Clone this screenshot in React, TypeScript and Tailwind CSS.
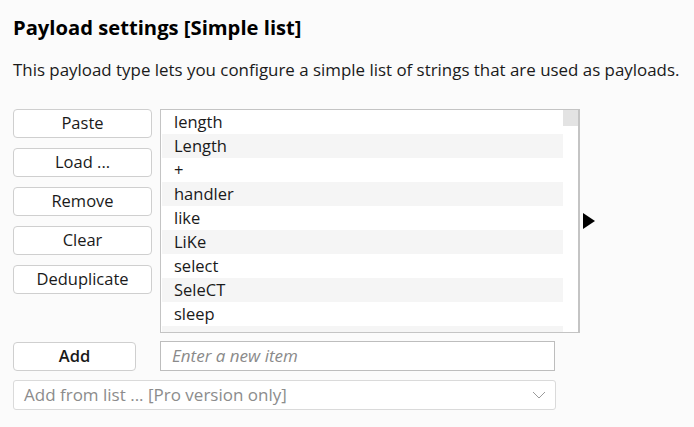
import React from "react";

const items = ["length", "Length", "+", "handler", "like", "LiKe", "select", "SeleCT", "sleep", ""];
const buttons = ["Paste", "Load ...", "Remove", "Clear", "Deduplicate"];

export default function App() {
  return (
    <div
      className="w-[694px] h-[427px] bg-[#fbfbfb] text-[#1a1a1a] pl-[13px] pt-[14px] overflow-hidden"
      style={{ fontFamily: '"Open Sans", "Noto Sans", sans-serif' }}
    >
      <h1 className="text-[20.2px] font-bold leading-[26px] text-black">
        Payload settings [Simple list]
      </h1>
      <p className="mt-[18px] text-[16.9px] leading-[24px] whitespace-nowrap">
        This payload type lets you configure a simple list of strings that are used as payloads.
      </p>

      <div className="mt-[27px] flex">
        <div className="flex w-[139px] flex-col gap-[10px]">
          {buttons.map((b) => (
            <button
              key={b}
              className="h-[29px] rounded-[4px] border border-[#cfcfcf] bg-white text-[16.5px] leading-none"
            >
              {b}
            </button>
          ))}
        </div>

        <div className="ml-[8px] flex h-[224px] w-[420px] border border-[#c4c4c4] border-r-2 bg-white pl-[1px]">
          <div className="flex-1 overflow-hidden">
            {items.map((it, i) => (
              <div
                key={i}
                className={`h-[24px] pl-[12px] text-[16.5px] leading-[24px] ${i % 2 === 1 ? "bg-[#f5f5f5]" : ""}`}
              >
                {it}
              </div>
            ))}
          </div>
          <div className="w-[15px]">
            <div className="h-[16px] bg-[#e3e3e3]" />
          </div>
        </div>

        <svg className="ml-[2px] mt-[104px]" width="14" height="16" viewBox="0 0 14 16">
          <path d="M1 0 L13 8 L1 16 Z" fill="#000" />
        </svg>
      </div>

      <div className="mt-[8px] flex items-center">
        <button className="h-[29px] w-[123px] rounded-[4px] border border-[#cfcfcf] bg-white text-[16.5px] font-semibold leading-none">
          Add
        </button>
        <div className="ml-[24px] flex h-[30px] w-[395px] items-center border border-[#bdbdbd] bg-white pl-[11px] text-[17px] italic text-[#8a8a8a]">
          Enter a new item
        </div>
      </div>

      <div className="mt-[9px] flex h-[30px] w-[543px] items-center justify-between rounded-[3px] border border-[#dadada] bg-white pl-[10px] pr-[9px] text-[17px] text-[#8c8c8c]">
        <span>Add from list ... [Pro version only]</span>
        <svg width="14" height="8" viewBox="0 0 14 8" fill="none" stroke="#9a9a9a" strokeWidth="1">
          <path d="M1 1 L7 7 L13 1" />
        </svg>
      </div>
    </div>
  );
}
